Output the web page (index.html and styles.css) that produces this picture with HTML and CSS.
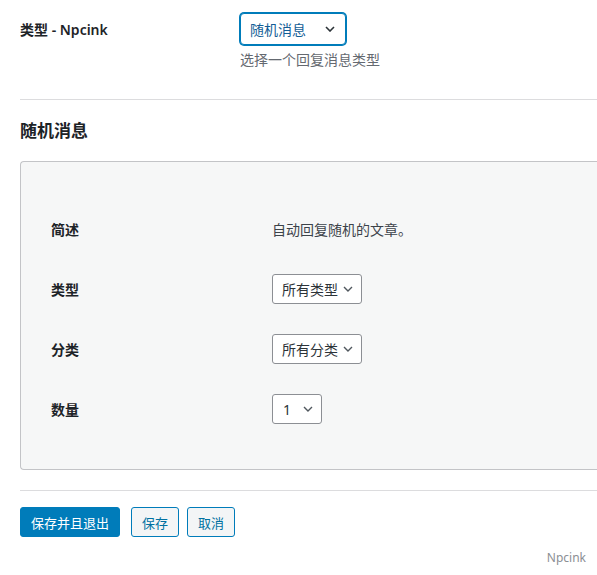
FILE: index.html
```html
<!DOCTYPE html>
<html lang="zh-CN">
<head>
<meta charset="utf-8">
<title>随机消息</title>
<link rel="stylesheet" href="styles.css">
</head>
<body>
<div class="page">
  <div class="type-row">
    <div class="type-label">类型 - Npcink</div>
    <div class="type-field">
      <div class="select select-focus">
        <span>随机消息</span>
        <svg class="chev chev-lg" viewBox="0 0 10 6" width="10" height="6"><path d="M1 1l4 4 4-4" fill="none" stroke="#2c3338" stroke-width="1.6"/></svg>
      </div>
      <p class="desc">选择一个回复消息类型</p>
    </div>
  </div>

  <hr class="sep">

  <h2 class="title">随机消息</h2>

  <div class="panel">
    <div class="row">
      <div class="row-label">简述</div>
      <div class="row-value text">自动回复随机的文章。</div>
    </div>
    <div class="row">
      <div class="row-label">类型</div>
      <div class="row-value">
        <div class="select select-sm">
          <span>所有类型</span>
          <svg class="chev" viewBox="0 0 10 6" width="10" height="6"><path d="M1 1l4 4 4-4" fill="none" stroke="#50575e" stroke-width="1.4"/></svg>
        </div>
      </div>
    </div>
    <div class="row">
      <div class="row-label">分类</div>
      <div class="row-value">
        <div class="select select-sm">
          <span>所有分类</span>
          <svg class="chev" viewBox="0 0 10 6" width="10" height="6"><path d="M1 1l4 4 4-4" fill="none" stroke="#50575e" stroke-width="1.4"/></svg>
        </div>
      </div>
    </div>
    <div class="row">
      <div class="row-label">数量</div>
      <div class="row-value">
        <div class="select select-sm select-num">
          <span>1</span>
          <svg class="chev" viewBox="0 0 10 6" width="10" height="6"><path d="M1 1l4 4 4-4" fill="none" stroke="#50575e" stroke-width="1.4"/></svg>
        </div>
      </div>
    </div>
  </div>

  <hr class="sep sep-bottom">

  <div class="actions">
    <button class="btn btn-primary">保存并且退出</button>
    <button class="btn btn-secondary">保存</button>
    <button class="btn btn-secondary">取消</button>
  </div>

  <div class="footer">Npcink</div>
</div>
</body>
</html>
```

FILE: styles.css
```css
html, body {
  margin: 0;
  padding: 0;
  background: #ffffff;
}

body {
  font-family: "Noto Sans", "Noto Sans CJK SC", sans-serif;
  font-size: 14px;
  color: #1d2327;
}

.page {
  padding-left: 20px;
}

.type-row {
  display: grid;
  grid-template-columns: 220px 1fr;
  padding-top: 13px;
}

.type-label {
  font-weight: 600;
  line-height: 32px;
  padding-top: 1px;
  color: #1d2327;
}

.select {
  display: inline-flex;
  align-items: center;
  justify-content: space-between;
  box-sizing: border-box;
  background: #fff;
  border: 1px solid #8c8f94;
  border-radius: 3px;
  color: #2c3338;
  font-size: 14px;
}

.select-focus {
  width: 106px;
  height: 32px;
  padding: 0 10px 0 9px;
  border-color: #007cba;
  box-shadow: 0 0 0 1px #007cba;
  border-radius: 4px;
  color: #135e96;
}

.select-sm {
  height: 30px;
  padding: 0 8px 0 9px;
  gap: 5px;
}

.select-num {
  width: 50px;
  padding-left: 10px;
}

.desc {
  margin: 5px 0 0;
  line-height: 20px;
  color: #646970;
}

.sep {
  border: 0;
  border-top: 1px solid #dcdcde;
  margin: 29px 0 0;
}

.title {
  margin: 0;
  padding-top: 16px;
  font-size: 17px;
  font-weight: 600;
  line-height: 30px;
  color: #1d2327;
}

.panel {
  margin-top: 15px;
  background: #f6f7f7;
  border: 1px solid #c3c4c7;
  border-right: 0;
  border-radius: 4px 0 0 4px;
  padding: 37px 0 30px 30px;
}

.row {
  display: grid;
  grid-template-columns: 221px 1fr;
  align-items: center;
  height: 30px;
  padding: 15px 0;
}

.row-label {
  font-weight: 600;
  color: #1d2327;
}

.row-value.text {
  color: #3c434a;
}

.sep-bottom {
  margin-top: 20px;
}

.actions {
  display: flex;
  align-items: center;
  padding-top: 16px;
}

.btn {
  box-sizing: border-box;
  height: 30px;
  padding: 0 10px;
  font-family: inherit;
  font-size: 13px;
  border-radius: 3px;
  border: 1px solid #007cba;
  cursor: pointer;
}

.btn-primary {
  background: #007cba;
  color: #fff;
  margin-right: 11px;
}

.btn-secondary {
  background: #f3f5f6;
  color: #0071a1;
  margin-right: 8px;
}

.footer {
  text-align: right;
  padding: 12px 11px 0 0;
  font-size: 12px;
  color: #8c8f94;
}
```
